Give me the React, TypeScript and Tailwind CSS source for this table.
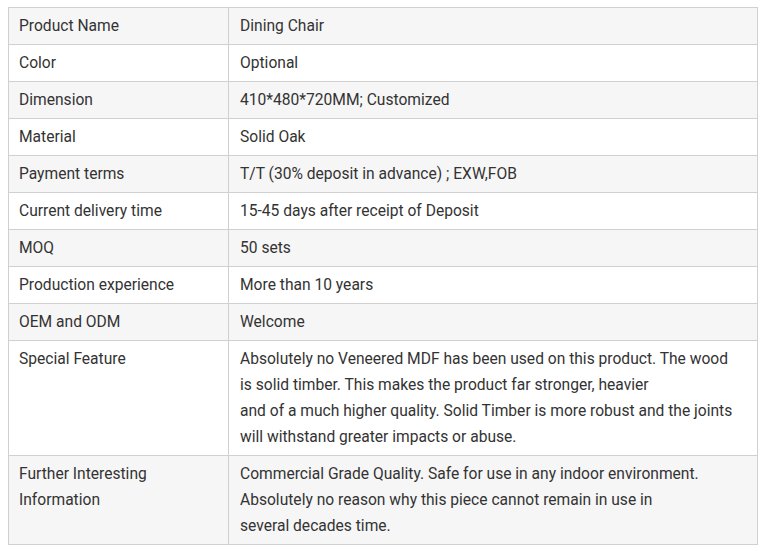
const rows: [string, string[]][] = [
  ['Product Name', ['Dining Chair']],
  ['Color', ['Optional']],
  ['Dimension', ['410*480*720MM; Customized']],
  ['Material', ['Solid Oak']],
  ['Payment terms', ['T/T (30% deposit in advance) ; EXW,FOB']],
  ['Current delivery time', ['15-45 days after receipt of Deposit']],
  ['MOQ', ['50 sets']],
  ['Production experience', ['More than 10 years']],
  ['OEM and ODM', ['Welcome']],
  [
    'Special Feature',
    [
      'Absolutely no Veneered MDF has been used on this product. The wood',
      'is solid timber. This makes the product far stronger, heavier',
      'and of a much higher quality. Solid Timber is more robust and the joints',
      'will withstand greater impacts or abuse.',
    ],
  ],
  [
    'Further Interesting Information',
    [
      'Commercial Grade Quality. Safe for use in any indoor environment.',
      'Absolutely no reason why this piece cannot remain in use in',
      'several decades time.',
    ],
  ],
];

export default function App() {
  return (
    <div className="w-[768px] h-[551px] bg-white pt-[7px] pl-[8px] font-['Roboto',sans-serif] text-[15.6px] leading-[26px] text-[#333]">
      <table className="w-[750px] border-collapse table-fixed">
        <tbody>
          {rows.map(([label, lines], i) => (
            <tr key={i} className={i % 2 === 0 ? 'bg-[#f6f6f6]' : 'bg-white'}>
              <td className="w-[220px] border border-[#d0d0d0] px-[10px] py-[5px] align-top">
                <div className="w-[185px]">{label}</div>
              </td>
              <td className="border border-[#d0d0d0] px-[11px] py-[5px] align-top whitespace-nowrap">
                {lines.map((l, j) => (
                  <div key={j}>{l}</div>
                ))}
              </td>
            </tr>
          ))}
        </tbody>
      </table>
    </div>
  );
}
